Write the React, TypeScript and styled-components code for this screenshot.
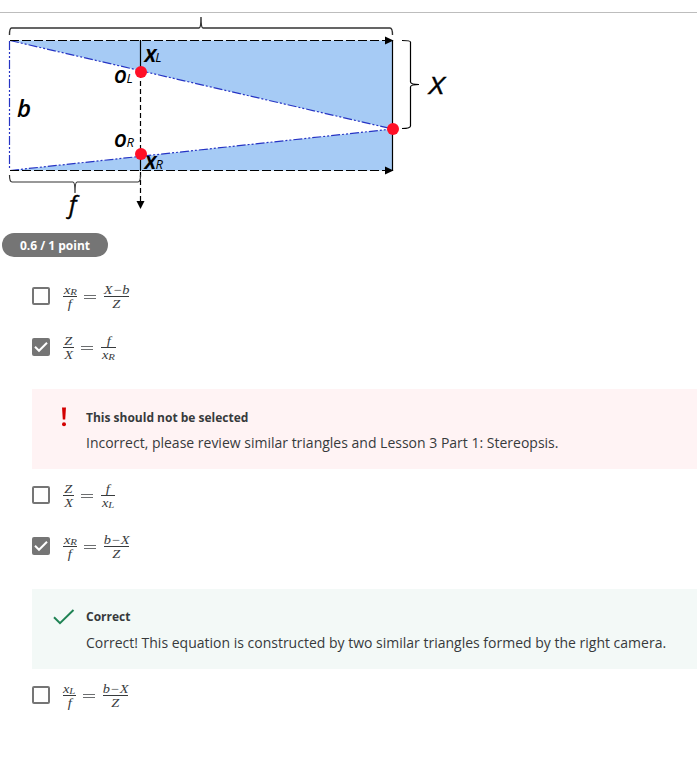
import React from 'react';
import styled, { createGlobalStyle } from 'styled-components';

const GlobalStyle = createGlobalStyle`
  body {
    margin: 0;
    background: #fff;
    color: #373a3c;
    font-family: 'Open Sans', 'Noto Sans', sans-serif;
    overflow: hidden;
  }
`;

const Page = styled.main`
  display: flex;
  flex-direction: column;
  width: 697px;
  height: 757px;
  overflow: hidden;
`;

const Figure = styled.section`
  height: 220px;
  margin-top: 12px;
  border-top: 1px solid #bdbdbd;
`;

const Diagram = styled.svg`
  display: block;
  font-family: 'Open Sans', 'Noto Sans', sans-serif;
  font-style: italic;
`;

const PointBadge = styled.div`
  align-self: flex-start;
  display: flex;
  align-items: center;
  justify-content: center;
  width: 106px;
  height: 24px;
  margin-left: 2px;
  border-radius: 12px;
  background: #757575;
  color: #fff;
  font-size: 12px;
  font-weight: 700;
  white-space: nowrap;
`;

const Options = styled.div`
  display: flex;
  flex-direction: column;
  margin: 14px 0 0 32px;
`;

const OptionRow = styled.div<{ $height: number }>`
  display: flex;
  align-items: center;
  height: ${(p) => p.$height}px;
`;

const Checkbox = styled.span<{ $checked?: boolean }>`
  box-sizing: border-box;
  display: flex;
  flex: none;
  width: 18px;
  height: 18px;
  margin-right: 13px;
  border: ${(p) => (p.$checked ? 0 : 2)}px solid #757575;
  border-radius: 2px;
  background: ${(p) => (p.$checked ? '#757575' : '#fff')};
`;

const Equation = styled.div`
  display: flex;
  align-items: center;
  height: 30px;
  font-family: 'Liberation Serif', serif;
  font-style: italic;
  color: #373a3c;
`;

const Fraction = styled.span<{ $width: number }>`
  display: flex;
  flex-direction: column;
  align-items: center;
  width: ${(p) => p.$width}px;
`;

const Term = styled.span<{ $bottom?: boolean }>`
  display: flex;
  justify-content: center;
  align-self: stretch;
  box-sizing: border-box;
  height: ${(p) => (p.$bottom ? 14 : 15)}px;
  border-bottom: ${(p) => (p.$bottom ? 0 : 1)}px solid #373a3c;
  font-size: 12px;
  line-height: ${(p) => (p.$bottom ? 15 : 17)}px;
  white-space: nowrap;
`;

const Glyphs = styled.span`
  display: flex;
  align-items: baseline;
  transform: scaleX(1.2);
`;

const Sub = styled.span`
  font-size: 9px;
  line-height: 9px;
  position: relative;
  top: 1px;
`;

const Equals = styled.svg`
  flex: none;
  margin: 1px 8px 0 7px;
`;

const Feedback = styled.section<{ $tone: 'bad' | 'good' }>`
  box-sizing: border-box;
  display: flex;
  height: 80px;
  margin-top: ${(p) => (p.$tone === 'bad' ? 16 : 18)}px;
  padding: 16px 0 0 20px;
  background: ${(p) => (p.$tone === 'bad' ? '#fff3f4' : '#f3f9f7')};
`;

const FeedbackIcon = styled.svg`
  flex: none;
  width: 24px;
  height: 24px;
  margin-right: 10px;
`;

const FeedbackBody = styled.div`
  display: flex;
  flex-direction: column;
  white-space: nowrap;
`;

const FeedbackTitle = styled.strong<{ $lineHeight: number }>`
  height: 25px;
  font-size: 12px;
  line-height: ${(p) => p.$lineHeight}px;
`;

const FeedbackText = styled.p`
  margin: 0;
  font-size: 14px;
  line-height: 26px;
`;

type Symbol = [string, string?];

const Expr = ({ value, bottom }: { value: Symbol; bottom?: boolean }) => (
  <Term $bottom={bottom}>
    <Glyphs>
      {value[0]}
      {value[1] && <Sub>{value[1]}</Sub>}
    </Glyphs>
  </Term>
);

interface OptionProps {
  checked?: boolean;
  height: number;
  left: [Symbol, Symbol, number];
  right: [Symbol, Symbol, number];
}

const Option = ({ checked, height, left, right }: OptionProps) => (
  <OptionRow $height={height}>
    <Checkbox $checked={checked}>
      {checked && (
        <svg width="18" height="18" viewBox="0 0 18 18">
          <path d="M3 8.8l4 4L15 4.8" fill="none" stroke="#fff" strokeWidth="2" />
        </svg>
      )}
    </Checkbox>
    <Equation>
      <Fraction $width={left[2]}>
        <Expr value={left[0]} />
        <Expr value={left[1]} bottom />
      </Fraction>
      <Equals width="12" height="6" viewBox="0 0 12 6">
        <path d="M0 1.5h12M0 4.5h12" stroke="#6c6e70" />
      </Equals>
      <Fraction $width={right[2]}>
        <Expr value={right[0]} />
        <Expr value={right[1]} bottom />
      </Fraction>
    </Equation>
  </OptionRow>
);

const StereoDiagram = () => (
  <Diagram width="460" height="219" viewBox="0 13 460 219">
    <path d="M10 40.5H392.5V129zM10 170.5L392.5 129V170.5z" fill="#a6cbf5" />
    <g fill="none" stroke="#2634c4" strokeWidth="1.2" strokeDasharray="9 2 2 2 2 2">
      <path d="M10 40.5L392.5 129M10 170.5L392.5 129" />
      <path d="M9.5 41V170" />
    </g>
    <g fill="none" stroke="#000" strokeWidth="1.2">
      <path d="M10 40.5H388M10 170.5H388" strokeDasharray="9 3" />
      <path d="M392.5 40V171M140.5 40V72M140.5 154V171" />
      <path d="M140.5 73V151M140.5 172V202" strokeDasharray="5 3" />
    </g>
    <path d="M385 36.5L393.5 40.5L385 44.5zM385 166.5L393.5 170.5L385 174.5zM136.5 201H144.5L140.5 209z" />
    <g fill="none" stroke="#333">
      <path d="M9.5 35Q9.5 28 11.5 28H199Q201 28 201 17Q201 28 203 28H390Q392.5 28 392.5 35" strokeWidth="1.4" />
      <path d="M9.5 175Q9.5 182 12 182H73Q75 182 75 193Q75 182 77 182H138Q140.5 182 140.5 175" strokeWidth="1.2" />
      <path d="M402 40.5Q410.5 40.5 410.5 42V82Q410.5 84.5 419 84.5Q410.5 84.5 410.5 87V126Q410.5 128.5 402 128.5" stroke="#000" strokeWidth="1.2" />
    </g>
    <g fill="#ff1027">
      <circle cx="141" cy="72" r="6" />
      <circle cx="141" cy="154" r="6" />
      <circle cx="393" cy="129" r="6" />
    </g>
    <g fontWeight="700" fontSize="17">
      <text x="144.5" y="62" textLength="11.5" lengthAdjust="spacingAndGlyphs">X</text>
      <text x="114" y="83">O</text>
      <text x="114" y="147">O</text>
      <text x="144.5" y="169" textLength="11.5" lengthAdjust="spacingAndGlyphs">X</text>
    </g>
    <g fontWeight="500" fontSize="13">
      <text x="155.3" y="62">L</text>
      <text x="126.5" y="83">L</text>
      <text x="126.5" y="147">R</text>
      <text x="155.5" y="169">R</text>
    </g>
    <g fontWeight="600" fontSize="24">
      <text x="17" y="117">b</text>
      <text x="429" y="94" fontWeight="500" stroke="#000" strokeWidth="0.4" textLength="15" lengthAdjust="spacingAndGlyphs">X</text>
      <text x="69" y="213" fontWeight="500" stroke="#000" strokeWidth="0.4">f</text>
    </g>
  </Diagram>
);

export default function App() {
  return (
    <>
      <GlobalStyle />
      <Page>
        <Figure>
          <StereoDiagram />
        </Figure>
        <PointBadge>0.6 / 1 point</PointBadge>
        <Options>
          <Option height={50} left={[['x', 'R'], ['f'], 14]} right={[['X−b'], ['Z'], 25]} />
          <Option checked height={52} left={[['Z'], ['X'], 11]} right={[['f'], ['x', 'R'], 15]} />
          <Feedback $tone="bad">
            <FeedbackIcon viewBox="0 0 24 24">
              <path d="M10 2.500h4l-.8 12h-2.400z" fill="#d30001" />
              <circle cx="12" cy="19.300" r="2" fill="#d30001" />
            </FeedbackIcon>
            <FeedbackBody>
              <FeedbackTitle $lineHeight={26}>This should not be selected</FeedbackTitle>
              <FeedbackText>Incorrect, please review similar triangles and Lesson 3 Part 1: Stereopsis.</FeedbackText>
            </FeedbackBody>
          </Feedback>
          <Option height={52} left={[['Z'], ['X'], 11]} right={[['f'], ['x', 'L'], 14]} />
          <Option checked height={50} left={[['x', 'R'], ['f'], 14]} right={[['b−X'], ['Z'], 25]} />
          <Feedback $tone="good">
            <FeedbackIcon viewBox="0 0 24 24">
              <path d="M2 12.2l6 6L21.5 5" fill="none" stroke="#1f8354" strokeWidth="2" />
            </FeedbackIcon>
            <FeedbackBody>
              <FeedbackTitle $lineHeight={24}>Correct</FeedbackTitle>
              <FeedbackText>Correct! This equation is constructed by two similar triangles formed by the right camera.</FeedbackText>
            </FeedbackBody>
          </Feedback>
          <Option height={52} left={[['x', 'L'], ['f'], 13]} right={[['b−X'], ['Z'], 25]} />
        </Options>
      </Page>
    </>
  );
}
